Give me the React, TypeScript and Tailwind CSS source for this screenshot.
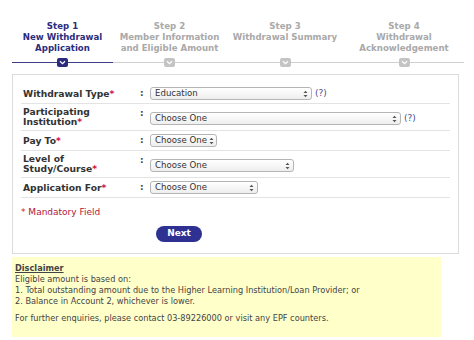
const font = { fontFamily: '"DejaVu Sans", Verdana, sans-serif' };

function StepIcon({ active }: { active: boolean }) {
  return (
    <div
      className={`w-[11px] h-[9px] rounded-[2px] flex items-center justify-center ${
        active ? "bg-[#2b2d7c]" : "bg-[#c4c4c4]"
      }`}
    >
      <svg width="7" height="5" viewBox="0 0 7 5">
        <path d="M1 1.2 L3.5 3.6 L6 1.2" fill="none" stroke="white" strokeWidth="1.2" />
      </svg>
    </div>
  );
}

function Step({ n, lines, width, active }: { n: number; lines: string[]; width: string; active?: boolean }) {
  return (
    <div className={`${width} flex flex-col items-center`}>
      <div
        className={`h-[36px] text-center font-bold text-[8.6px] leading-[11px] ${
          active ? "text-[#2b2d7c]" : "text-[#a9a9a9]"
        }`}
      >
        <div>Step {n}</div>
        {lines.map((l) => (
          <div key={l}>{l}</div>
        ))}
      </div>
      <div className="relative w-full h-[10px] flex items-center justify-center">
        <div className={`absolute left-0 right-0 top-[5px] h-px ${active ? "bg-[#3b3d86]" : "bg-[#cfcfcf]"}`} />
        <div className="relative">
          <StepIcon active={!!active} />
        </div>
      </div>
    </div>
  );
}

function Select({ value, width }: { value: string; width: string }) {
  return (
    <div
      className={`${width} shrink-0 h-[13px] rounded-[3px] border border-[#b5b5b5] bg-gradient-to-b from-white to-[#eeeeee] flex items-center justify-between pl-[4px] pr-[3px] text-[8.6px] text-[#333] whitespace-nowrap`}
    >
      <span className="leading-none">{value}</span>
      <svg width="5" height="8" viewBox="0 0 5 8" className="shrink-0 ml-[2px]">
        <path d="M0.5 3 L2.5 0.8 L4.5 3 Z M0.5 5 L2.5 7.2 L4.5 5 Z" fill="#555" />
      </svg>
    </div>
  );
}

function Row({
  label,
  children,
  tall,
  help,
}: {
  label: React.ReactNode;
  children: React.ReactNode;
  tall?: boolean;
  help?: boolean;
}) {
  return (
    <div className={`flex border-b border-[#e3e3e3] ${tall ? "h-[27px] pt-[3px]" : "h-[20px] items-center"}`}>
      <div className="w-[119px] pl-[2px] font-bold text-[9.2px] leading-[10px] text-[#333]">{label}</div>
      <div className="w-[10px] text-[9px] font-bold text-[#444]">:</div>
      <div className="flex items-center gap-[3px]">
        {children}
        {help && <span className="text-[9px] text-[#4a4a8a]">(?)</span>}
      </div>
    </div>
  );
}

const Req = () => <span className="text-[#d0103a]">*</span>;

export default function App() {
  return (
    <div className="w-[474px] h-[340px] bg-white overflow-hidden" style={font}>
      <div className="flex pl-[12px] pt-[21px]">
        <Step n={1} lines={["New Withdrawal", "Application"]} width="w-[101px]" active />
        <Step n={2} lines={["Member Information", "and Eligible Amount"]} width="w-[113px]" />
        <Step n={3} lines={["Withdrawal Summary"]} width="w-[118px]" />
        <Step n={4} lines={["Withdrawal", "Acknowledgement"]} width="w-[120px]" />
      </div>

      <div className="ml-[12px] mt-[7px] w-[447px] h-[180px] border border-[#dcdcdc] px-[8px] pt-[9px]">
        <Row label={<>Withdrawal Type<Req /></>} help>
          <Select value="Education" width="w-[162px]" />
        </Row>
        <Row label={<>Participating<br />Institution<Req /></>} tall help>
          <Select value="Choose One" width="w-[251px]" />
        </Row>
        <Row label={<>Pay To<Req /></>}>
          <Select value="Choose One" width="w-[67px]" />
        </Row>
        <Row label={<>Level of<br />Study/Course<Req /></>} tall>
          <Select value="Choose One" width="w-[144px]" />
        </Row>
        <Row label={<>Application For<Req /></>}>
          <Select value="Choose One" width="w-[108px]" />
        </Row>
        <div className="mt-[8px] text-[9px] text-[#b0153a]">
          <span className="text-[#d0103a]">*</span> Mandatory Field
        </div>
        <div className="flex mt-[6px] pl-[135px]">
          <button className="w-[46px] h-[16px] rounded-full bg-[#2e3192] text-white font-bold text-[9px] leading-none">
            Next
          </button>
        </div>
      </div>

      <div className="ml-[12px] mt-[3px] w-[429px] h-[80px] bg-[#ffffca] px-[3px] pt-[6px] text-[8.2px] leading-[11px] text-[#444]">
        <div className="font-bold underline">Disclaimer</div>
        <div>Eligible amount is based on:</div>
        <div>1. Total outstanding amount due to the Higher Learning Institution/Loan Provider; or</div>
        <div>2. Balance in Account 2, whichever is lower.</div>
        <div className="mt-[6px]">For further enquiries, please contact 03-89226000 or visit any EPF counters.</div>
      </div>
    </div>
  );
}
